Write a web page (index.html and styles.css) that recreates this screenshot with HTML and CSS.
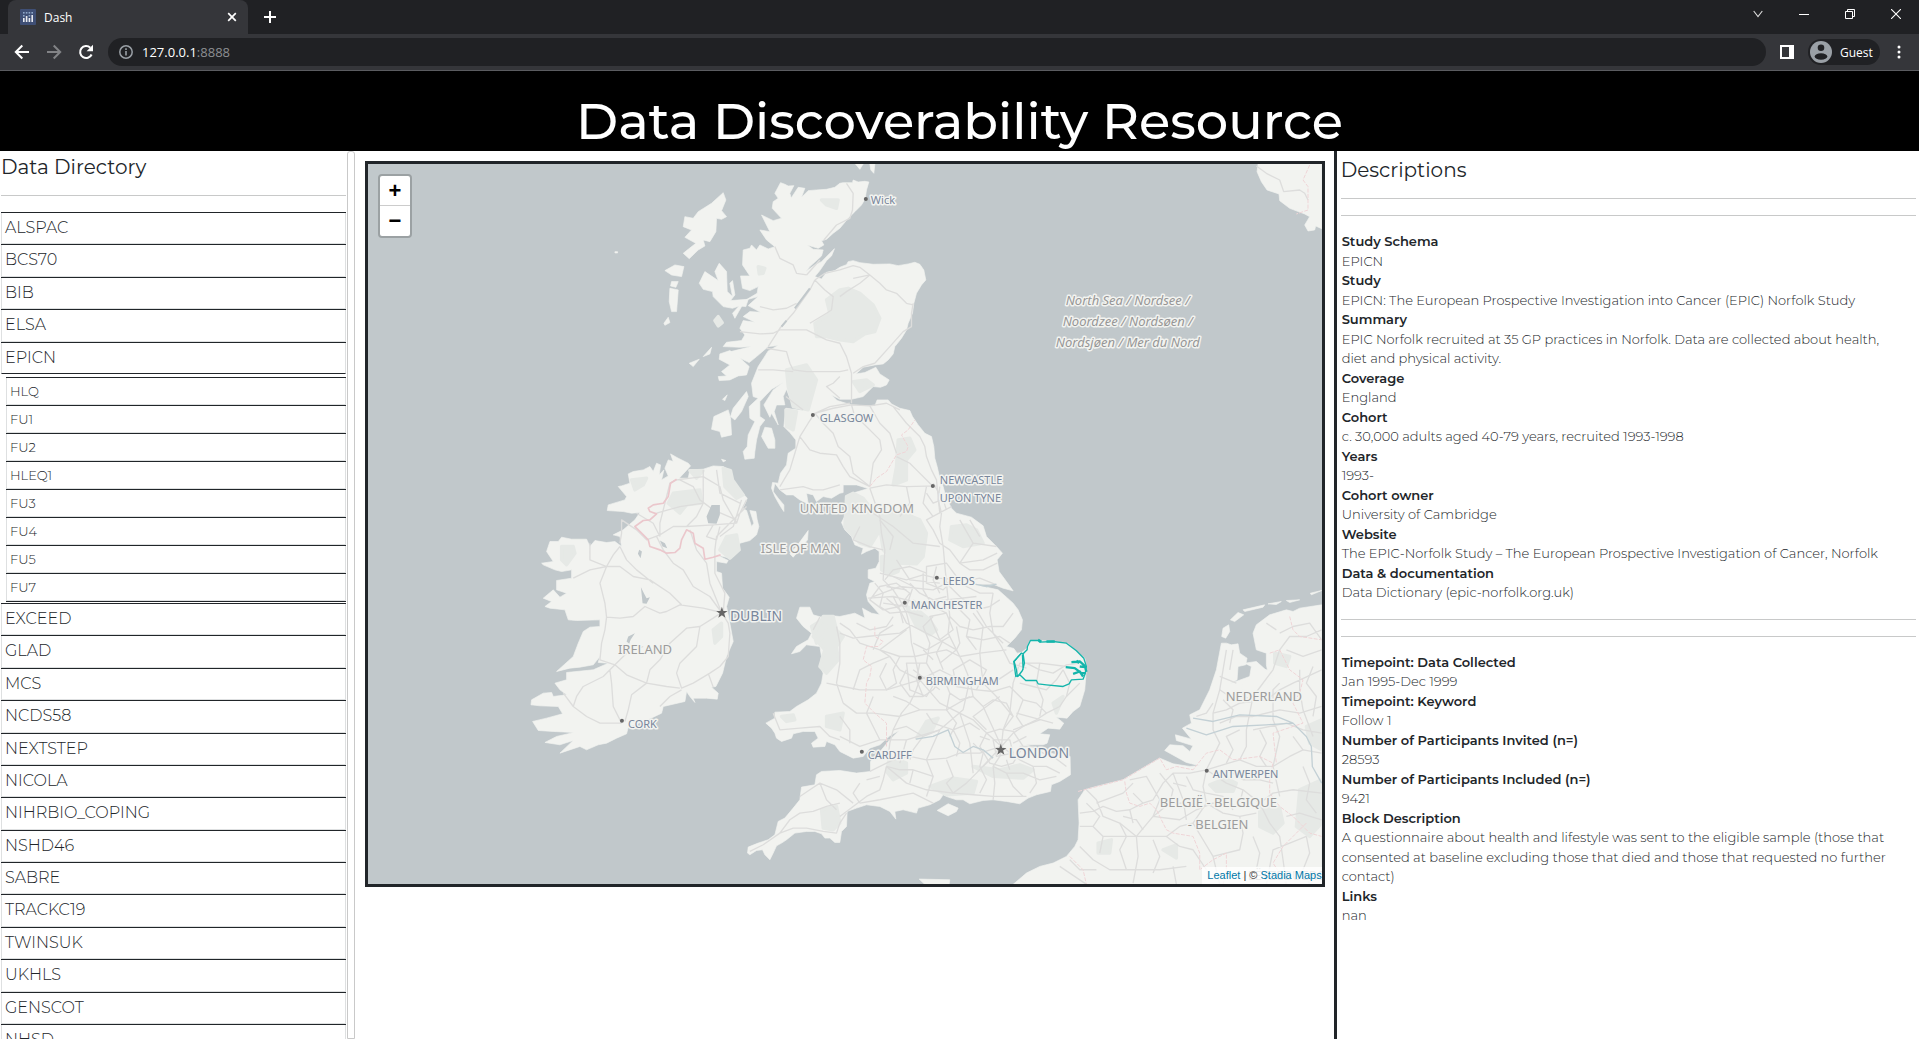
FILE: index.html
```html
<!DOCTYPE html>
<html lang="en">
<head>
<meta charset="utf-8">
<meta name="viewport" content="width=device-width, initial-scale=1">
<title>Dash</title>
<link rel="stylesheet" href="styles.css">
</head>
<body>
<div class="window">
  <div class="tabstrip">
    <div class="tab">
      <svg class="favicon" viewBox="0 0 16 16" aria-hidden="true"><rect width="16" height="16" rx="1" fill="#3f4f75"/><g fill="#e8eaf0"><rect x="3" y="9" width="1.6" height="4"/><rect x="5.8" y="7" width="1.6" height="6"/><rect x="8.6" y="9" width="1.6" height="4"/><rect x="11.4" y="6" width="1.6" height="7"/></g><g fill="#8fa7c9"><rect x="3" y="3" width="1.6" height="1.6"/><rect x="5.8" y="3" width="1.6" height="1.6"/><rect x="8.6" y="3" width="1.6" height="1.6"/><rect x="11.4" y="3" width="1.6" height="1.6"/><rect x="3" y="6" width="1.6" height="1.6"/><rect x="8.6" y="6" width="1.6" height="1.6"/></g></svg>
      <span class="tab-title">Dash</span>
      <button class="chrome-btn tab-close" aria-label="Close tab"><svg width="10" height="10" viewBox="0 0 10 10"><path d="M1.2 1.2l7.6 7.6M8.8 1.2L1.2 8.8" stroke="#fff" stroke-width="1.7"/></svg></button>
    </div>
    <button class="chrome-btn tab-new" aria-label="New tab"><svg width="12" height="12" viewBox="0 0 12 12"><path d="M6 0v12M0 6h12" stroke="#fff" stroke-width="2"/></svg></button>
    <div class="controls">
      <button class="chrome-btn control" aria-label="Search tabs"><svg width="10" height="8" viewBox="0 0 10 8"><path d="M.7 1L5 6.6 9.3 1" fill="none" stroke="#ddd" stroke-width="1.1"/></svg></button>
      <button class="chrome-btn control" aria-label="Minimise"><svg width="10" height="10" viewBox="0 0 10 10"><path d="M0 5.5h10" stroke="#fff"/></svg></button>
      <button class="chrome-btn control" aria-label="Restore"><svg width="10" height="10" viewBox="0 0 10 10"><path d="M.5 2.5h7v7h-7zM2.500 2.500v-2h7v7h-2" fill="none" stroke="#fff"/></svg></button>
      <button class="chrome-btn control" aria-label="Close"><svg width="10" height="10" viewBox="0 0 10 10"><path d="M0 0l10 10M10 0L0 10" stroke="#fff" stroke-width="1.1"/></svg></button>
    </div>
  </div>
  <div class="toolbar">
    <button class="chrome-btn nav" aria-label="Back"><svg width="16" height="16" viewBox="0 0 16 16"><path d="M15 8H2M8.300 1.500L1.800 8l6.500 6.500" fill="none" stroke="#fff" stroke-width="2"/></svg></button>
    <button class="chrome-btn nav" aria-label="Forward"><svg width="16" height="16" viewBox="0 0 16 16"><path d="M1 8h13M7.700 1.500L14.200 8l-6.500 6.500" fill="none" stroke="#828386" stroke-width="2"/></svg></button>
    <button class="chrome-btn nav" aria-label="Reload"><svg width="16" height="16" viewBox="0 0 16 16"><path d="M13.600 10.500A6 6 0 1 1 12.300 3.700" fill="none" stroke="#fff" stroke-width="2.100"/><path d="M15 .8v6.400H8.600z" fill="#fff"/></svg></button>
    <div class="omnibox">
      <svg width="14" height="14" viewBox="0 0 14 14" aria-hidden="true"><circle cx="7" cy="7" r="6.200" fill="none" stroke="#9aa0a6" stroke-width="1.500"/><path d="M7 6v4.500M7 3.300v1.700" stroke="#9aa0a6" stroke-width="1.600"/></svg>
      <span class="url">127.0.0.1<span class="port">:8888</span></span>
    </div>
    <button class="chrome-btn panel" aria-label="Side panel"><svg width="14" height="14" viewBox="0 0 14 14"><path d="M1 1h12v12H1z" fill="none" stroke="#fff" stroke-width="2"/><path d="M9 1h4v12H9z" fill="#fff"/></svg></button>
    <button class="chrome-btn guest"><svg width="22" height="22" viewBox="0 0 22 22" aria-hidden="true"><circle cx="11" cy="11" r="11" fill="#9aa0a6"/><circle cx="11" cy="6.800" r="3.300" fill="#202124"/><ellipse cx="11" cy="15.500" rx="6.300" ry="3.300" fill="#202124"/></svg>Guest</button>
    <button class="chrome-btn more" aria-label="Menu"><svg width="4" height="14" viewBox="0 0 4 14"><g fill="#fff"><circle cx="2" cy="2" r="1.500"/><circle cx="2" cy="7" r="1.500"/><circle cx="2" cy="12" r="1.500"/></g></svg></button>
  </div>

  <header class="banner"><h1>Data Discoverability Resource</h1></header>

  <main class="columns">
    <nav class="sidebar">
      <div class="directory">
        <h2>Data Directory</h2>
        <hr>
        <ul class="studies">
          <li><button>ALSPAC</button></li>
          <li><button>BCS70</button></li>
          <li><button>BIB</button></li>
          <li><button>ELSA</button></li>
          <li class="open"><button aria-expanded="true">EPICN</button>
            <ul class="blocks">
              <li><button>HLQ</button></li>
              <li><button>FU1</button></li>
              <li><button>FU2</button></li>
              <li><button>HLEQ1</button></li>
              <li><button>FU3</button></li>
              <li><button>FU4</button></li>
              <li><button>FU5</button></li>
              <li><button>FU7</button></li>
            </ul>
          </li>
          <li><button>EXCEED</button></li>
          <li><button>GLAD</button></li>
          <li><button>MCS</button></li>
          <li><button>NCDS58</button></li>
          <li><button>NEXTSTEP</button></li>
          <li><button>NICOLA</button></li>
          <li><button>NIHRBIO_COPING</button></li>
          <li><button>NSHD46</button></li>
          <li><button>SABRE</button></li>
          <li><button>TRACKC19</button></li>
          <li><button>TWINSUK</button></li>
          <li><button>UKHLS</button></li>
          <li><button>GENSCOT</button></li>
          <li><button>NHSD</button></li>
        </ul>
      </div>
      <div class="track"></div>
    </nav>

    <section class="map-column">
      <div class="map">
        <svg class="tiles" viewBox="0 0 954 720" preserveAspectRatio="xMidYMid slice" role="img" aria-label="Map of the British Isles">
          <g transform="translate(-8 -14) scale(.33333)">
            <g class="land">
              <!-- Great Britain -->
              <path id="gb" d="M1262 98L1275 103 1285 108 1302 107 1290 130 1294 144 1315 112 1335 115 1325 142 1345 122 1370 120 1400 118 1425 112 1440 100 1450 98 1478 98 1480 90 1495 96 1515 94 1527 96 1520 120 1516 146 1505 165 1485 185 1465 205 1440 235 1420 250 1400 268 1385 272 1392 285 1375 295 1342 285 1360 298 1390 300 1385 318 1350 350 1338 365 1365 345 1385 335 1424 296 1415 318 1400 332 1380 362 1365 380 1385 387 1400 367 1425 362 1440 352 1460 344 1465 335 1480 332 1500 338 1540 343 1590 342 1615 347 1645 342 1665 337 1680 343 1692 360 1698 390 1685 405 1670 430 1662 460 1658 490 1645 520 1640 540 1625 565 1605 590 1600 612 1585 630 1570 642 1545 645 1510 652 1488 672 1515 668 1548 652 1560 672 1588 690 1580 705 1562 712 1540 710 1525 725 1510 740 1475 748 1440 748 1415 735 1432 752 1475 765 1515 768 1545 768 1552 750 1585 750 1595 762 1620 775 1650 782 1658 800 1675 825 1695 850 1715 860 1722 890 1725 925 1732 950 1740 985 1750 1010 1758 1040 1775 1075 1790 1090 1835 1102 1870 1128 1880 1160 1910 1190 1928 1210 1912 1230 1918 1265 1940 1295 1960 1323 1930 1315 1900 1303 1845 1303 1880 1312 1915 1320 1940 1342 1960 1360 1975 1380 1988 1410 1985 1440 1965 1465 1940 1490 1962 1496 1972 1510 1985 1508 2002 1495 2003 1488 2012 1472 2040 1472 2080 1475 2125 1482 2150 1505 2175 1525 2180 1550 2178 1580 2175 1620 2160 1670 2140 1685 2122 1705 2090 1702 2112 1720 2100 1738 2065 1735 2040 1752 2070 1755 2062 1780 2050 1785 2000 1785 2040 1800 2080 1812 2131 1820 2132 1875 2100 1895 2075 1905 2072 1925 2030 1935 2005 1945 1980 1962 1940 1955 1900 1950 1870 1952 1830 1962 1810 1950 1790 1950 1765 1942 1750 1935 1740 1950 1710 1965 1675 1975 1670 1990 1630 1980 1605 1985 1608 2008 1590 1985 1560 1970 1520 1965 1490 1975 1462 1985 1460 2030 1445 2045 1440 2078 1425 2078 1410 2065 1395 2065 1385 2052 1365 2045 1340 2045 1305 2050 1280 2070 1265 2080 1250 2088 1240 2110 1230 2130 1215 2115 1208 2100 1190 2102 1170 2115 1163 2110 1165 2092 1195 2080 1225 2070 1245 2055 1255 2015 1275 2005 1300 1975 1320 1950 1325 1912 1365 1905 1370 1875 1385 1865 1440 1862 1490 1870 1532 1865 1532 1835 1565 1800 1590 1770 1618 1742 1590 1758 1560 1785 1530 1795 1510 1820 1480 1825 1440 1805 1425 1785 1400 1775 1395 1790 1360 1792 1355 1780 1375 1765 1365 1745 1330 1745 1300 1752 1295 1765 1265 1775 1250 1765 1245 1750 1235 1735 1218 1720 1245 1705 1245 1687 1290 1685 1310 1670 1345 1650 1370 1630 1385 1600 1390 1570 1380 1550 1385 1520 1380 1490 1340 1485 1320 1505 1295 1512 1310 1490 1345 1470 1355 1450 1330 1430 1310 1405 1320 1372 1350 1372 1360 1395 1385 1402 1420 1398 1440 1400 1485 1390 1515 1405 1508 1375 1535 1390 1560 1395 1525 1355 1520 1335 1530 1300 1545 1295 1525 1285 1525 1260 1548 1255 1558 1235 1558 1205 1545 1195 1520 1205 1505 1213 1510 1195 1485 1185 1475 1160 1455 1140 1445 1118 1462 1085 1475 1050 1485 1028 1525 1016 1490 1005 1450 1005 1450 1028 1440 1030 1415 1045 1390 1040 1370 1055 1360 1035 1340 1030 1345 1062 1320 1050 1300 1035 1280 1035 1260 1020 1245 1000 1240 1025 1255 1045 1272 1065 1272 1085 1262 1070 1245 1040 1235 1015 1238 998 1255 1000 1262 970 1280 945 1285 910 1308 895 1308 870 1290 848 1272 830 1278 775 1330 782 1298 765 1280 718 1270 740 1275 765 1250 765 1243 785 1255 825 1235 790 1230 802 1212 765 1240 720 1270 698 1235 718 1200 755 1200 800 1215 810 1200 830 1190 870 1185 905 1183 925 1155 928 1150 905 1162 890 1165 855 1185 815 1170 805 1168 770 1195 745 1180 740 1175 700 1195 650 1225 603 1255 587 1225 590 1190 620 1168 638 1130 620 1105 607 1125 602 1175 590 1140 592 1090 590 1100 577 1145 572 1155 555 1140 535 1150 512 1185 517 1150 500 1170 485 1202 487 1165 467 1195 440 1165 448 1145 470 1125 505 1118 490 1150 455 1192 430 1195 410 1170 422 1148 415 1142 378 1170 378 1148 345 1150 300 1170 295 1175 285 1190 300 1200 285 1225 297 1245 290 1220 270 1200 240 1230 245 1205 195 1240 212 1265 205 1237 175 1240 155 1255 145 1245 130Z"/>
              <!-- Ireland -->
              <path d="M932 912L955 925 985 940 992 948 958 985 985 985 990 960 1030 958 1060 948 1090 950 1112 962 1118 990 1140 1020 1162 1045 1155 1062 1148 1075 1160 1082 1175 1130 1182 1120 1170 1082 1188 1085 1192 1110 1197 1130 1190 1155 1170 1172 1140 1180 1135 1205 1110 1225 1070 1215 1105 1232 1100 1240 1070 1235 1070 1265 1085 1270 1088 1315 1108 1342 1100 1370 1108 1410 1120 1475 1100 1520 1088 1570 1068 1610 1055 1612 1075 1630 1072 1648 1040 1645 1000 1645 1005 1658 990 1640 980 1625 975 1655 910 1670 905 1690 880 1702 850 1715 805 1732 800 1752 770 1765 740 1780 715 1785 680 1800 660 1790 600 1810 640 1772 600 1785 555 1778 590 1760 642 1748 580 1745 535 1742 518 1715 560 1705 608 1692 595 1670 540 1668 513 1665 515 1650 550 1630 575 1628 580 1640 620 1635 600 1620 585 1600 620 1590 620 1568 700 1560 745 1540 715 1538 720 1520 700 1545 660 1552 630 1555 590 1565 640 1520 655 1480 670 1445 690 1432 720 1430 720 1410 650 1412 625 1410 615 1380 570 1375 555 1370 575 1355 550 1345 580 1320 600 1342 620 1330 590 1320 590 1292 635 1285 635 1260 605 1265 585 1260 550 1245 545 1240 580 1235 560 1205 570 1175 595 1175 605 1162 635 1168 680 1168 690 1190 705 1172 740 1178 765 1175 785 1190 780 1160 760 1155 790 1140 825 1110 840 1088 815 1090 790 1085 742 1082 745 1065 795 1050 800 1040 775 1010 785 1008 810 1000 805 972 820 965 850 960 870 950 880 965 890 940 902 945 898 975 912 960 905 990 925 978 915 955 925 930 940 935Z"/>
              <!-- Hebrides, Skye, Mull, Islay, Arran, Man, Wight -->
              <path d="M1090 128L1098 150 1085 182 1100 200 1085 208 1070 205 1068 245 1050 275 1030 270 1035 288 1015 300 988 326 970 310 985 298 1008 280 975 262 995 240 970 230 975 200 1000 205 1015 185 1055 160ZM915 362L945 345 972 350 965 380 935 375ZM935 395L955 395 948 412 932 408ZM930 415L955 420 950 485 935 485 928 455ZM925 502L930 518 915 526 912 520ZM1078 340L1100 365 1102 425 1118 440 1110 400 1118 392 1125 435 1112 452 1165 448 1158 470 1138 468 1118 475 1090 470 1060 440 1058 425 1030 418 1018 400 1035 365 1075 392 1065 365ZM1065 512L1075 500 1087 518 1075 528ZM1055 592L1050 612 1030 620ZM1018 628L1000 650 988 640ZM1080 612L1110 602 1135 620 1168 650 1160 675 1135 678 1110 690 1078 692 1075 680 1100 678 1085 665 1110 645 1078 628ZM1160 725L1165 740 1145 785 1125 810 1112 800 1120 775ZM1102 735L1095 752 1088 748ZM1105 780L1112 805 1115 855 1085 862 1080 845 1055 838 1062 800ZM1215 832L1235 835 1245 870 1245 895 1225 895 1205 860ZM1345 1142L1343 1170 1300 1222 1290 1212 1310 1190ZM1765 1962L1795 1975 1790 1985 1765 1998 1732 1982ZM1485 40L1510 42 1500 58ZM1530 42L1545 42 1542 70 1533 60ZM765 305h8v4h-8zM1678 2188L1770 2190 1768 2204 1695 2204ZM1085 928L1098 932 1090 936Z"/>
              <!-- Norway -->
              <path d="M2695 42L2692 65 2705 95 2722 120 2758 132 2760 152 2790 175 2835 192 2850 200 2835 225 2845 243 2865 240 2868 228 2886 236 2886 42Z"/>
              <!-- Continent -->
              <path d="M1960 2204L2000 2170 2040 2150 2080 2140 2120 2120 2145 2090 2155 2070 2158 2020 2155 1950 2175 1920 2210 1910 2290 1890 2340 1860 2400 1825 2440 1842 2490 1850 2520 1848 2480 1838 2415 1802 2430 1785 2470 1788 2490 1805 2500 1788 2450 1772 2447 1755 2495 1768 2468 1735 2495 1720 2490 1695 2520 1680 2550 1620 2570 1560 2585 1480 2600 1480 2615 1485 2635 1482 2640 1510 2662 1525 2658 1545 2635 1550 2632 1590 2610 1602 2670 1580 2675 1550 2655 1540 2690 1535 2718 1560 2740 1570 2730 1595 2720 1545 2720 1510 2690 1500 2680 1450 2690 1425 2730 1395 2780 1380 2800 1385 2820 1375 2886 1365 2886 2204Z"/>
              <path d="M2607 1425L2610 1445 2598 1465 2586 1460 2590 1435ZM2612 1410L2635 1388 2652 1395 2625 1415ZM2650 1380L2715 1365 2710 1372 2655 1385ZM2725 1362L2765 1355 2750 1364ZM2780 1352L2820 1350 2790 1358ZM2852 1330L2886 1322 2855 1335ZM2648 1600L2700 1555 2740 1565 2725 1600 2670 1625 2645 1618Z"/>
            </g>
            <g class="park">
              <path d="M1365 520L1410 490 1400 450 1440 420 1465 415 1500 430 1540 465 1560 505 1545 545 1515 552 1480 575 1440 570 1400 560 1370 560ZM1280 660L1340 645 1370 690 1345 780 1300 770 1285 710ZM1278 780L1310 785 1300 840 1280 830ZM1615 870L1650 865 1665 900 1640 930 1640 990 1600 1005 1610 950ZM1460 1040L1480 1030 1510 1045 1545 1090 1555 1150 1530 1190 1500 1180 1455 1130ZM1555 1100L1620 1085 1680 1110 1700 1150 1690 1220 1670 1242 1610 1240 1570 1200ZM1775 1130L1820 1125 1850 1140 1870 1180 1810 1190 1770 1170ZM1565 1220L1600 1215 1620 1240 1615 1265 1590 1275 1565 1260ZM1640 1370L1680 1385 1710 1410 1730 1440 1710 1455 1670 1430ZM1390 1400L1420 1400 1430 1440 1450 1460 1430 1490 1435 1530 1400 1570 1380 1550 1395 1500 1360 1460ZM1400 1700L1450 1690 1440 1740 1400 1730ZM1385 1980L1430 1970 1440 2020 1420 2040 1390 2035ZM1590 1820L1640 1840 1640 1870 1600 1890 1580 1865ZM1710 1910L1780 1885 1850 1895 1840 1930 1760 1935ZM1840 1850L1920 1860 1980 1845 2020 1860 1990 1885 1900 1880ZM940 1030L1020 1020 1025 1060 980 1065 960 1090 925 1060ZM1090 955L1112 962 1118 990 1150 1035 1130 1045 1095 1010ZM1100 1160L1130 1155 1138 1200 1110 1225 1080 1200ZM1060 1440L1085 1420 1085 1460 1065 1480ZM815 990L860 985 850 1005 825 1020ZM605 1190L640 1190 645 1210 620 1245 605 1230ZM990 962L1030 962 1010 985ZM1700 1715L1735 1705 1715 1745 1670 1765ZM2550 1905L2600 1885 2630 1900 2620 1925 2570 1925ZM2820 1920L2886 1890 2886 2020 2850 2060 2810 2030ZM2700 1970L2760 1975 2770 2020 2740 2050 2700 2030ZM2745 1510L2790 1520 2780 1550 2745 1540ZM2840 1730L2886 1710 2886 1800 2850 1780ZM2215 2080L2255 2070 2250 2110 2215 2110ZM2410 2100L2450 2085 2450 2125ZM1065 512L1075 500 1087 518 1075 528ZM1195 350L1215 355 1210 370 1198 372ZM1385 150L1435 150 1430 175 1400 165ZM1480 695L1520 690 1540 705 1500 725ZM1265 1700L1300 1695 1305 1710 1280 1715ZM1355 1430L1395 1405 1400 1450 1370 1480ZM2080 1660L2110 1640 2090 1690Z"/>
            </g>
            <g class="road">
              <path d="M1365 390L1350 420 1300 490 1260 535 1225 590M1365 390L1395 370 1440 360 1480 347 1500 352 1530 375 1560 400 1580 420 1610 430 1640 460 1660 465M1480 385L1530 375 1500 400 1460 425 1440 440M1365 390L1395 420 1420 440 1415 480 1400 490 1350 520M1245 290L1260 325 1300 345 1310 370 1340 375M1340 375L1380 330M1392 270L1430 225 1470 205 1478 180 1480 130 1460 100M1200 470L1240 480 1280 475 1310 460M1140 545L1200 552 1240 550 1260 540 1340 540 1370 555 1400 570 1440 580 1460 620 1475 670 1475 760M1220 595L1280 605 1290 640 1300 660 1340 665 1440 665 1465 660M1660 460L1655 490 1655 530 1630 545 1590 590 1545 640M1480 670L1510 650 1545 640M1440 745L1400 710 1420 700 1440 680M1365 790L1420 775 1475 765 1530 768 1580 760 1620 780M1365 790L1345 820 1320 860 1305 910 1290 960 1260 1010M1320 860L1350 900 1380 910 1430 915 1450 950 1470 980 1530 1010M1365 790L1390 820 1420 850 1435 890 1470 920 1480 970 1530 1010M1475 765L1485 800 1510 820 1560 870 1565 900 1540 940 1530 1010M1530 768L1560 820 1590 850 1610 910M1260 1020L1330 1010 1360 1020 1390 1020 1440 1005M1600 770L1640 820 1680 860 1695 890 1700 920 1715 960 1730 990 1740 1090M1530 1015L1580 1005 1640 1010 1730 1008M1610 920L1650 940 1670 960 1720 1010M1330 780L1278 740M1195 660L1240 660 1300 665M1365 790L1410 770 1470 760"/>
              <path d="M1085 1388L1030 1375 960 1365 920 1385 900 1390 855 1370 820 1400 780 1405 740 1402M740 1402L735 1440 725 1480 720 1530 765 1545 800 1575 860 1600 920 1610 960 1615M1085 1388L1060 1405 1020 1430 980 1435 930 1480 900 1530 870 1560 860 1600 815 1635 805 1680 795 1715M765 1545L730 1580 670 1610 650 1640 640 1670 680 1700 720 1720 785 1720M750 1560L755 1600 760 1670 785 1720M765 1545L800 1510 850 1490M1085 1388L1050 1340 1000 1310 970 1260 940 1240 910 1200 890 1160M1085 1388L1070 1350 1050 1300 1040 1240 1010 1200 990 1140M1090 1388L1095 1330 1065 1270 1065 1200 1070 1160 1130 1100 1160 1070M965 1365L930 1330 870 1290 820 1280 780 1250 740 1250 690 1260 640 1285M740 1250L720 1300 735 1360 740 1402M780 1180L785 1150 785 1110 830 1140 860 1170 900 1155 940 1130 980 1130 1060 1125 1130 1120M780 1190L760 1215 740 1250M780 1190L800 1230 830 1260 880 1300M1085 1388L1105 1420 1110 1450 1105 1520 1080 1550 1050 1570 1000 1600 965 1615 950 1570 960 1540 1010 1490 1020 1430M900 1160L900 1120 920 1040 930 1000 950 990 1030 980 1080 1010 1090 1050 1130 1120M965 1620L930 1640 900 1670M960 990L1000 1010 1020 1050 1060 1080 1130 1110M1030 960L1030 1060 1010 1100 980 1130M1070 960L1080 1030 1140 1060M1045 1570L1060 1612M640 1670L610 1630M1145 1050L1120 1130 1080 1160M690 1180L690 1230 740 1250M890 1090L960 1070 1030 1060M900 1160L880 1120 830 1090M1130 1120L1140 1090 1160 1050M1060 1125L1040 1160 1070 1170 1080 1130"/>
            </g>
            <g class="road">
              <path d="M1530 1015L1560 1100 1565 1150 1575 1200 1570 1290 1600 1320 1620 1350 1640 1390 1650 1430 1655 1480 1665 1520 1680 1590 1740 1660 1800 1690 1840 1710 1870 1740 1925 1790M1740 1010L1735 1050 1745 1090 1740 1130 1750 1190 1760 1300 1770 1400 1765 1450 1790 1500 1810 1540 1830 1590 1840 1640 1870 1670 1925 1790M1775 1070L1700 1110 1720 1140 1740 1180 1770 1200 1800 1240 1870 1230 1912 1210M1560 1270L1640 1290 1690 1275 1730 1285 1830 1290 1860 1285 1910 1305M1525 1345L1600 1340 1640 1350 1680 1360 1760 1350 1850 1340M1680 1590L1740 1560 1780 1580 1830 1590 1870 1585 1900 1600 1960 1560M1680 1590L1650 1575 1620 1560 1590 1520 1560 1500 1500 1480 1470 1440 1440 1420M1680 1590L1665 1630 1650 1660 1625 1690 1600 1740 1590 1780 1585 1820M1680 1590L1580 1620 1500 1620 1450 1610 1400 1600M1530 1865L1600 1830 1650 1820 1700 1830 1760 1825 1800 1810 1860 1810 1925 1790M1925 1790L1920 1820 1900 1850 1905 1900 1900 1950M1925 1790L1850 1870 1820 1900 1780 1930M1925 1790L1980 1830 2020 1850 2060 1850 2100 1870M1925 1790L1960 1750 1990 1730 2030 1710 2060 1690 2100 1670 2120 1640 2160 1600M1925 1790L1930 1740 1950 1690 1960 1600 1980 1540 2040 1540 2120 1550M1980 1600L2020 1610 2060 1620 2090 1590 2110 1560M1440 1760L1500 1790 1560 1770 1640 1770 1740 1740M1580 1850L1570 1890 1560 1920 1520 1940 1480 1970 1440 2000M1580 1850L1640 1900 1700 1920 1780 1930 1840 1935 1900 1940 2000 1940M1700 1830L1720 1880 1700 1940M1640 1770L1620 1840M1800 1690L1830 1780 1840 1870M1830 1590L1810 1680 1740 1740 1700 1830M1770 1400L1800 1430 1840 1440 1890 1430 1930 1430 1960 1390M1760 1300L1800 1340 1850 1380 1880 1430 1930 1480M1665 1520L1710 1510 1760 1500 1800 1520 1860 1510 1940 1500M1860 1510L1865 1560 1870 1600 1910 1640 1960 1700M1600 1340L1640 1420 1720 1460 1790 1500M1440 1450L1480 1465 1520 1460 1620 1450 1650 1430M1560 1500L1620 1520 1665 1520M2000 1555L1950 1540 1925 1490 1900 1450 1890 1390 1900 1330M2160 1540L2120 1545 2080 1570 2040 1560 2000 1540"/>
              <path d="M1170 2105L1210 2085 1260 2050 1290 2010 1320 1990 1360 1985 1400 1970 1440 1960M1260 2050L1300 2035 1340 2035 1390 2045 1430 2050 1440 2020 1460 1990M1320 1940L1350 1920 1380 1900 1400 1950 1430 1980M1380 1900L1430 1920 1480 1960M1240 1690L1260 1740 1320 1735 1380 1730 1410 1760 1440 1770M1380 1402L1360 1440M1430 1430L1440 1480 1440 1540 1430 1600M1540 1090L1600 1130 1660 1180 1740 1190M1610 1230L1650 1290 1740 1300M1540 1340L1620 1310 1720 1320 1780 1290M1570 1360L1640 1370 1660 1310 1600 1280M1640 1540L1700 1540 1730 1590 1700 1640 1650 1620ZM1660 1560L1740 1620M1880 1750L1920 1738 1960 1745 1990 1790 1960 1840 1925 1850 1890 1840 1860 1790ZM1900 1770L1950 1770 1960 1810 1910 1820ZM1530 1350L1560 1310 1610 1300 1650 1330 1620 1370 1570 1380ZM1700 1250L1760 1240 1790 1280 1750 1320 1700 1300ZM1710 1400L1760 1390 1780 1440 1740 1470ZM1780 1560L1830 1530 1880 1560 1850 1620 1790 1610ZM1720 1960L1660 1930 1560 1950 1500 1960M1980 1790L2020 1790 2050 1810 2080 1820 2120 1850M1970 1690L2080 1720M1960 1740L2040 1710M1600 1640L1640 1655 1680 1680 1760 1680 1830 1640M1540 1690L1620 1700 1680 1680M1800 1240L1840 1180 1800 1110M1840 1180L1910 1190M1790 1500L1740 1540M1840 1390L1870 1430 1860 1510M1700 1380L1660 1350M1770 1460L1700 1500 1660 1480M1920 1640L1880 1670 1840 1700 1880 1740"/>
              <path d="M1575 1290L1600 1260 1650 1250 1700 1270M1545 1300L1570 1330 1560 1370 1590 1390 1640 1385 1690 1400M1580 1310L1640 1320M1580 1345L1620 1380 1630 1420M1600 1400L1580 1430 1530 1440 1490 1420M1640 1440L1600 1470 1560 1500M1650 1300L1680 1330 1720 1350 1760 1340M1690 1270L1690 1320 1720 1370 1760 1390M1730 1250L1720 1290 1740 1330M1790 1290L1820 1310 1860 1330 1900 1330M1800 1240L1830 1260 1870 1260 1912 1240M1720 1400L1690 1430 1710 1480 1700 1540M1750 1470L1730 1510 1750 1560M1790 1430L1800 1480 1790 1500M1800 1380L1830 1410 1820 1460 1850 1500M1820 1460L1870 1470 1920 1460 1950 1480M1640 1560L1620 1600 1650 1640 1690 1640 1720 1620 1750 1580M1620 1520L1600 1560 1610 1600 1580 1620 1560 1580 1580 1540M1680 1540L1670 1590 1690 1640M1750 1580L1770 1630 1760 1680 1790 1720 1770 1760M1840 1640L1800 1650 1770 1630M1870 1670L1900 1650 1940 1660 1960 1700 1930 1740M1850 1620L1900 1625 1950 1610 1990 1650 2030 1660 2060 1690M1990 1650L1970 1700 1990 1730M2040 1540L2030 1600 2050 1650 2040 1700M2110 1560L2130 1600 2120 1640M1700 1690L1720 1720 1780 1740 1830 1720 1860 1740M1780 1740L1800 1780 1790 1820M1740 1740L1690 1760 1660 1800 1650 1830M1690 1760L1640 1730 1600 1740M1840 1780L1870 1810 1860 1850 1880 1890 1860 1930M1900 1850L1940 1870 1990 1870 2040 1890 2090 1880M1940 1870L1960 1910 1990 1940M2020 1850L2030 1900 2010 1930M1760 1830L1780 1880 1760 1900 1780 1930M1720 1880L1660 1860 1620 1860 1580 1850M1660 1860L1650 1900M1520 1890L1560 1880M1500 1900L1480 1930 1500 1960M1540 1640L1520 1690 1540 1730 1560 1770M1450 1660L1490 1690 1540 1690M1450 1660L1430 1600M1480 1620L1500 1560 1540 1540 1590 1520M1440 1700L1470 1740 1470 1780M1560 1110L1600 1160 1590 1200M1640 1010L1650 1060 1620 1100M1700 1010L1690 1060 1720 1100M1720 1000L1750 1050 1760 1080M1700 1030L1720 1060 1745 1050M1830 1110L1860 1160M1500 1130L1480 1170 1530 1190 1570 1200M1920 1350L1890 1370 1850 1380M1690 1500L1720 1530M1600 1425L1560 1450 1540 1500M1890 1770L1860 1760M1960 1780L2000 1760M1940 1830L1950 1860M1900 1820L1870 1850"/>
            </g>
            <g class="road">
              <path d="M2160 1990L2200 1985 2230 1970 2270 1985 2310 1980 2350 1960 2380 1950 2410 1900 2440 1870 2490 1870 2540 1860M2330 2060L2335 2120 2320 2200M2330 2060L2280 2020 2230 2000 2210 1950 2180 1920M2330 2060L2380 2000 2400 1950 2360 1880 2310 1890M2540 1860L2530 1910 2540 1960 2500 2020 2460 2030 2420 2060 2330 2060M2540 1860L2560 1820 2580 1780 2560 1740 2560 1690 2580 1620 2590 1560 2600 1500M2580 1720L2630 1700 2680 1700 2760 1680 2820 1690 2886 1670M2540 1860L2640 1830 2690 1850 2740 1850 2790 1820 2830 1800 2886 1810M2640 1830L2660 1790 2660 1740 2670 1690 2680 1640 2740 1560 2760 1500 2790 1460 2840 1460 2886 1440M2540 1860L2600 1900 2650 1920 2700 1960 2730 2020 2760 2060 2770 2130 2780 2204M2700 1960L2740 1930 2800 1920 2886 1930M2560 1690L2600 1680 2640 1660 2720 1650 2760 1620 2800 1600 2886 1560M2380 2000L2460 2010 2510 1980 2560 1960 2650 1970M2500 2020L2530 2070 2560 2120 2580 2204M2640 2000L2650 2050 2640 2100 2560 2120M2720 2204L2740 2100 2790 2080 2840 2060M2760 1450L2800 1430 2850 1420 2886 1470M2160 2090L2200 2130 2250 2160 2320 2160 2400 2160 2480 2150M2210 1960L2290 1930 2320 1900M2740 1850L2760 1940M2820 1560L2820 1620 2830 1680 2860 1760M2740 1660L2740 1710 2760 1760 2740 1850M2440 1870L2470 1950 2480 2010M2100 2150L2180 2204M2690 48L2720 70 2760 90 2772 125 2820 120 2835 130 2845 150M2886 1750L2830 1740 2780 1720 2680 1740"/>
              <path d="M2580 1620L2610 1640 2640 1630 2670 1650M2590 1650L2620 1680 2610 1720M2560 1660L2540 1690 2510 1700M2640 1740L2600 1760 2620 1800 2600 1840M2700 1740L2720 1780 2700 1820 2720 1850M2480 1880L2500 1920 2540 1930 2590 1940 2620 1980M2540 1960L2590 1990 2640 2000 2690 1990M2650 1920L2640 1960M2400 1870L2440 1920 2430 1960 2380 2000M2400 1950L2440 1960 2500 1960M2280 2020L2300 2060 2280 2100 2300 2160M2380 2070L2400 2120 2380 2170M2230 2060L2280 2060 2330 2060M2420 2060L2460 2090 2500 2100 2540 2160M2200 2030L2230 2060 2220 2110M2180 1960L2220 2000 2200 2030 2160 2030M2780 2000L2820 1990 2886 2010M2830 1850L2850 1900 2840 1950 2870 1990M2800 1760L2830 1800M2760 1600L2740 1620 2740 1660M2780 1500L2830 1520 2886 1500M2860 1550L2840 1600 2870 1640 2860 1700M2720 1420L2750 1440M2620 1500L2610 1560M2580 1580L2630 1600M2840 2060L2850 2110 2830 2160 2850 2204M2680 2060L2700 2110 2690 2160 2640 2190M2620 1870L2650 1890 2700 1890 2740 1900M2480 1910L2440 1900M2320 1930L2350 1960M2440 2150L2450 2204M2130 2130L2160 2160 2210 2160M1410 1080L1430 1060M2290 2000L2330 2010 2350 2040M2310 1980L2320 2020"/>
            </g>
            <g class="river"><path d="M1668 1768L1720 1760 1765 1740 1785 1790 1810 1808 1840 1790 1870 1800 1900 1825M2500 1705L2560 1715 2640 1695 2750 1700 2800 1720 2840 1760 2855 1790 2858 1850 2886 1900M2480 1735L2540 1755 2620 1730 2720 1725 2800 1720M1845 1303L1880 1310 1910 1303"/></g>
            <g class="water"><path d="M838 1200L846 1205 842 1225 834 1212ZM843 1312L852 1330 860 1345 870 1342 860 1362 848 1360ZM805 1460L825 1450 812 1470 808 1482 800 1475ZM900 1172L915 1180 922 1195 908 1190ZM1055 1065L1080 1065 1080 1095 1070 1122 1045 1120 1040 1100Z"/><path d="M1350 415L1305 475M1280 512L1265 530" stroke="#c1c8cb" stroke-width="6"/></g>
            <g class="border">
              <path class="solid" d="M950 988L932 1000 925 1040 910 1060 880 1065 865 1075 870 1085 890 1092 870 1110 850 1112 825 1130 845 1150 865 1170 870 1190 900 1200 920 1210 945 1208 960 1195 965 1170 980 1140 1000 1150 1005 1180 1030 1195 1035 1228 1060 1222 1082 1215"/>
              <path d="M1530 1010L1550 985 1580 965 1610 915 1640 905 1645 890 1625 855 1645 840 1665 810M1545 1430L1545 1460 1570 1475 1555 1490 1520 1490 1510 1530 1535 1550 1530 1580 1520 1600 1515 1660 1545 1690 1580 1720 1580 1790M2295 1895L2300 1930 2310 1960 2340 1970 2370 1960 2390 1980 2400 2000 2420 2040 2440 2050 2500 2060 2520 2110 2520 2160 2560 2130 2600 2110 2600 2160 2590 2204M2155 1925L2290 1890 2400 1825 2420 1860 2450 1850 2500 1860 2540 1810 2580 1800 2620 1830 2700 1820 2740 1840 2730 1880 2730 1930 2760 1970 2800 2000 2850 2050 2886 2060M2730 1510L2760 1500 2790 1560 2830 1590 2820 1630 2800 1660 2830 1720 2740 1750 2750 1840M2790 1400L2800 1440 2820 1460 2886 1470M2850 45L2830 90 2845 110 2845 180 2810 192M2130 2120L2170 2160 2180 2204M2840 2020L2800 2060 2770 2090 2740 2140 2760 2170 2780 2204"/>
            </g>
            <g class="area">
              <path d="M2012 1472L2035 1472 2040 1477 2080 1475 2120 1480 2150 1503 2172 1525 2180 1550 2176 1572 2170 1588 2135 1590 2128 1602 2110 1610 2060 1605 2035 1602 2030 1592 1998 1592 1980 1575 1968 1580 1962 1535 1985 1510 1990 1512 2002 1500 2003 1490Z"/>
              <path d="M1990 1512L1994 1540 1988 1562 1974 1580M1985 1510L1963 1535 1970 1560 1973 1582M1988 1515L1990 1560"/>
              <path class="thick" d="M2135 1537L2160 1535 2175 1548 2180 1566M2118 1552L2145 1555 2165 1570 2178 1570M2140 1572L2160 1565 2170 1580M2035 1470L2045 1476M2060 1475L2085 1475M2150 1532L2158 1540M2160 1550L2178 1552"/>
            </g>
          </g>
          <g class="dots">
            <circle cx="498" cy="35" r="2"/><circle cx="445" cy="251" r="2"/><circle cx="565" cy="322" r="2"/><circle cx="254" cy="557" r="2"/><circle cx="569" cy="414" r="2"/><circle cx="537" cy="439" r="2"/><circle cx="552" cy="514" r="2"/><circle cx="494" cy="588" r="2"/><circle cx="839" cy="607" r="2"/>
            <path id="star" d="M354 443l1.400 4.100h4.300l-3.400 2.600 1.300 4.200-3.600-2.500-3.600 2.500 1.300-4.200-3.400-2.600h4.300z"/>
            <use href="#star" x="279" y="137"/>
          </g>
          <g class="city">
            <text x="503" y="40">Wick</text>
            <text x="452" y="258">GLASGOW</text>
            <text x="572" y="320">NEWCASTLE</text>
            <text x="572" y="338">UPON TYNE</text>
            <text x="260" y="564">CORK</text>
            <text x="575" y="421">LEEDS</text>
            <text x="543" y="445">MANCHESTER</text>
            <text x="558" y="521">BIRMINGHAM</text>
            <text x="500" y="595">CARDIFF</text>
            <text x="845" y="614">ANTWERPEN</text>
            <text class="capital" x="362" y="457">DUBLIN</text>
            <text class="capital" x="641" y="594">LONDON</text>
          </g>
          <g class="country">
            <text x="432" y="349">UNITED KINGDOM</text>
            <text x="393" y="389">ISLE OF MAN</text>
            <text x="250" y="490">IRELAND</text>
            <text x="858" y="537">NEDERLAND</text>
            <text x="792" y="643">BELGIË - BELGIQUE</text>
            <text x="820" y="665">- BELGIEN</text>
            <text x="880" y="716">LËTZEBUERG</text>
          </g>
          <g class="sea">
            <text x="760" y="141">North Sea / Nordsee /</text>
            <text x="760" y="162">Noordzee / Nordsøen /</text>
            <text x="760" y="183">Nordsjøen / Mer du Nord</text>
          </g>
        </svg>
        <div class="zoom">
          <button aria-label="Zoom in">+</button>
          <button aria-label="Zoom out">−</button>
        </div>
        <div class="attribution"><a href="#leaflet">Leaflet</a> | © <a href="#stadia">Stadia Maps</a></div>
      </div>
    </section>

    <section class="details">
      <h2>Descriptions</h2>
      <hr>
      <hr>
      <dl>
        <dt>Study Schema</dt><dd>EPICN</dd>
        <dt>Study</dt><dd>EPICN: The European Prospective Investigation into Cancer (EPIC) Norfolk Study</dd>
        <dt>Summary</dt><dd>EPIC Norfolk recruited at 35 GP practices in Norfolk. Data are collected about health, diet and physical activity.</dd>
        <dt>Coverage</dt><dd>England</dd>
        <dt>Cohort</dt><dd>c. 30,000 adults aged 40-79 years, recruited 1993-1998</dd>
        <dt>Years</dt><dd>1993-</dd>
        <dt>Cohort owner</dt><dd>University of Cambridge</dd>
        <dt>Website</dt><dd><a href="#website">The EPIC-Norfolk Study – The European Prospective Investigation of Cancer, Norfolk</a></dd>
        <dt>Data &amp; documentation</dt><dd><a href="#dictionary">Data Dictionary (epic-norfolk.org.uk)</a></dd>
      </dl>
      <hr>
      <hr>
      <dl>
        <dt>Timepoint: Data Collected</dt><dd>Jan 1995-Dec 1999</dd>
        <dt>Timepoint: Keyword</dt><dd>Follow 1</dd>
        <dt>Number of Participants Invited (n=)</dt><dd>28593</dd>
        <dt>Number of Participants Included (n=)</dt><dd>9421</dd>
        <dt>Block Description</dt><dd>A questionnaire about health and lifestyle was sent to the eligible sample (those that consented at baseline excluding those that died and those that requested no further contact)</dd>
        <dt>Links</dt><dd>nan</dd>
      </dl>
    </section>
  </main>
</div>
</body>
</html>
```

FILE: styles.css
```css
*, *::before, *::after { box-sizing: border-box; }

body {
  margin: 0;
  background: #fff;
  color: #212529;
  font-family: Montserrat, Inter, "Open Sans", sans-serif;
}

button {
  margin: 0;
  padding: 0;
  border: 0;
  background: none;
  color: inherit;
  font: inherit;
}

a { color: inherit; text-decoration: none; }
svg { display: block; }

.window {
  display: flex;
  flex-direction: column;
  height: 100vh;
  overflow: hidden;
}

/* Browser frame */
.tabstrip, .toolbar { font-family: "Open Sans", sans-serif; color: #fff; }

.tabstrip {
  display: flex;
  flex: none;
  height: 34px;
  padding-left: 8px;
  background: #202124;
}

.chrome-btn { display: flex; align-items: center; justify-content: center; }

.tab {
  display: flex;
  align-items: center;
  width: 240px;
  padding: 0 11px 0 12px;
  border-radius: 8px 8px 0 0;
  background: #35363a;
  font-size: 12px;
}

.favicon { width: 16px; height: 16px; }
.tab-title { flex: 1; margin-left: 8px; }
.tab-new { width: 44px; }
.controls { display: flex; margin-left: auto; padding-bottom: 6px; }
.control { width: 46px; }

.toolbar {
  display: flex;
  flex: none;
  align-items: center;
  height: 37px;
  padding: 0 12px 0 6px;
  border-bottom: 1px solid #5b5c60;
  background: #35363a;
}

.nav { width: 32px; height: 28px; }

.omnibox {
  display: flex;
  flex: 1;
  align-items: center;
  gap: 9px;
  height: 28px;
  margin-left: 6px;
  padding-left: 11px;
  border-radius: 14px;
  background: #202124;
  font-size: 13px;
}

.port { color: #8d8f92; }
.panel { width: 42px; }

.guest {
  justify-content: flex-start;
  gap: 8px;
  width: 72px;
  height: 26px;
  padding-left: 2px;
  border-radius: 13px;
  background: #202124;
  font-size: 12px;
}

.more { width: 28px; margin: 0 -6px 0 5px; }

/* Page */
.banner {
  display: flex;
  flex: none;
  align-items: flex-end;
  justify-content: center;
  height: 80px;
  background: #000;
  color: #fff;
}

h1 { margin: 0; font-size: 51px; font-weight: 500; line-height: 60px; }
h2 { margin: 0; font-size: 20px; font-weight: 400; line-height: 30px; }
hr { margin: 16px 0; border: 0; border-top: 1px solid #c8c9c9; }
ul { margin: 0; padding: 0; list-style: none; }

.columns {
  display: grid;
  grid-template-columns: 18.5% 51% 1fr;
  flex: 1;
  min-height: 0;
}

.sidebar { display: flex; min-height: 0; overflow: hidden; }
.directory { flex: 1; padding: 1px 1px 0; }
.directory hr { margin: 13px 0 16px; }

.track {
  width: 8px;
  border: 1px solid #c9c9c9;
  border-radius: 3px 3px 0 0;
}

.studies { font-size: 16px; font-weight: 300; line-height: 1.9; }
.studies li { border-top: 1px solid #212529; }

.studies button {
  display: block;
  width: 100%;
  padding: 0 3px;
  border: 1px solid #dee0e1;
  border-top: 0;
  text-align: left;
}

.open > button { border-bottom-color: #212529; }

.blocks {
  margin: 3px 0 1px 5px;
  border-bottom: 1px solid #212529;
  font-size: 13px;
  line-height: 26px;
}

.map-column { padding: 10px 9px 10px 10px; }

.map {
  position: relative;
  aspect-ratio: 960 / 726;
  border: 3px solid #212529;
  background: #c1c8cb;
  overflow: hidden;
}

.tiles { width: 100%; height: 100%; font-family: "Noto Sans", "Open Sans", sans-serif; }
.land { fill: #f2f3f0; stroke: #f2f3f0; stroke-width: 2; stroke-linejoin: round; }
.park { fill: #e6e9e6; stroke: #e6e9e6; stroke-width: 10; stroke-linejoin: round; }
.water { fill: #c1c8cb; }
.road, .river, .border, .area { fill: none; stroke-linejoin: round; }
.road { stroke: #dddddc; stroke-width: 4; }
.river { stroke: #c3d0d5; stroke-width: 4; }
.border { stroke: #efd5d7; stroke-width: 3; stroke-dasharray: 12 4; }
.border .solid { stroke: #ebc7cc; stroke-width: 5; stroke-dasharray: none; }
.area { stroke: #13b5ab; stroke-width: 4; }
.area .thick { stroke-width: 7; }
.dots { fill: #666; }

.city, .country, .sea {
  stroke: #f2f3f0;
  stroke-width: 3px;
  stroke-linejoin: round;
  paint-order: stroke;
}

.city { fill: #78869b; font-size: 11px; }
.city .capital { font-size: 14px; }
.country { fill: #9c9c9c; font-size: 13px; }
.sea { fill: #969696; font-size: 13px; font-style: italic; text-anchor: middle; }

.zoom {
  position: absolute;
  top: 10px;
  left: 10px;
  border: 2px solid #9ba1a3;
  border-radius: 4px;
  background: #fff;
}

.zoom button {
  display: block;
  width: 30px;
  height: 30px;
  color: #000;
  font: bold 22px/30px "Liberation Sans", sans-serif;
}

.zoom button:first-child { border-bottom: 1px solid #ccc; }

.attribution {
  position: absolute;
  right: 0;
  bottom: 0;
  padding-left: 5px;
  background: rgba(255, 255, 255, .8);
  color: #333;
  font: 11px/17px "Liberation Sans", sans-serif;
}

.attribution a { color: #0078a8; }

.details {
  padding: 4px 3px 0 4px;
  border-left: 3px solid #212529;
  font-size: 13px;
  line-height: 1.5;
}

.details h2 + hr { margin-top: 13px; }
.details dl { margin: 0; padding: 0 12px 0 1px; }
.details dt { font-weight: 600; }
.details dd { margin: 0; font-weight: 300; }
```
